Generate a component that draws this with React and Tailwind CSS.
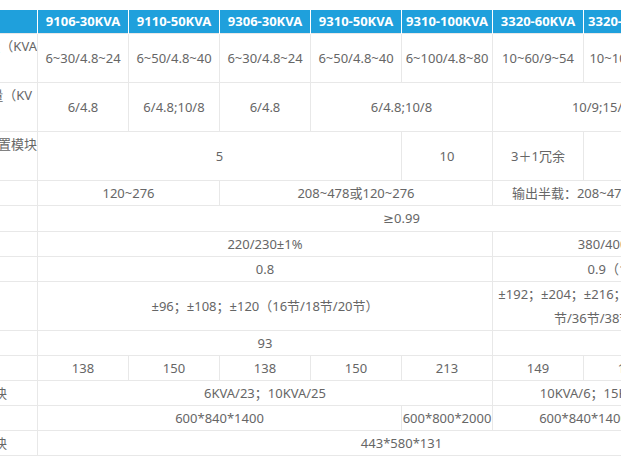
import React from 'react'

const models = [
  '9106-30KVA',
  '9110-50KVA',
  '9306-30KVA',
  '9310-50KVA',
  '9310-100KVA',
  '3320-60KVA',
  '3320-100KVA',
  '3320-120KVA',
]

// each row: label parts + cells [text, colSpan]
const rows = [
  {
    label: { first: '额定容量（KVA', rest: '/KW）', pr: 'pr-0' },
    tall: true,
    cells: [
      ['6~30/4.8~24'],
      ['6~50/4.8~40'],
      ['6~30/4.8~24'],
      ['6~50/4.8~40'],
      ['6~100/4.8~80'],
      ['10~60/9~54'],
      ['10~100/9~90'],
      ['10~120/9~108'],
    ],
  },
  {
    label: { first: '单模块容量（KV', rest: 'A/KW）', pr: 'pr-[5px]' },
    tall: true,
    cells: [['6/4.8'], ['6/4.8;10/8'], ['6/4.8'], ['6/4.8;10/8', 2], ['10/9;15/13.5;20/18', 3]],
  },
  {
    label: { first: '最大配置模块', rest: '数量', pr: 'pr-0' },
    tall: true,
    cells: [['5', 4], ['10'], ['3＋1冗余'], ['4＋1冗余', 2]],
  },
  {
    label: { text: '输入电压' },
    cells: [['120~276', 2], ['208~478或120~276', 3], ['输出半载：208~478或120~276（三相）', 3]],
  },
  {
    label: { text: '功率因数' },
    cells: [
      [
        <>
          <span className="font-['DejaVu_Sans']">≥</span>0.99
        </>,
        8,
      ],
    ],
  },
  { label: { text: '输出电压' }, cells: [['220/230±1%', 5], ['380/400/415±1%', 3]] },
  { label: { text: '功率因数' }, cells: [['0.8', 5], ['0.9（10KVA）', 3]] },
  {
    label: { text: '电池电压' },
    cells: [
      ['±96；±108；±120（16节/18节/20节）', 5],
      [['±192；±204；±216；±228；±240（32节/34', '节/36节/38节/40节可选）'], 3],
    ],
  },
  { label: { text: '效率' }, cells: [['93', 5], ['93', 3]] },
  {
    label: { end: '重量（kg）', pr: 'pr-[30px]' },
    cells: [['138'], ['150'], ['138'], ['150'], ['213'], ['149'], ['180'], ['195']],
  },
  {
    label: { end: '重量/模块', pr: 'pr-[30px]' },
    cells: [['6KVA/23；10KVA/25', 5], ['10KVA/6；15KVA/8；20KVA/9', 3]],
  },
  {
    label: { end: '尺寸（mm）', pr: 'pr-[30px]' },
    cells: [['600*840*1400', 4], ['600*800*2000'], ['600*840*1400', 2], ['600*800*2000']],
  },
  { label: { end: '尺寸/模块', pr: 'pr-[30px]' }, cells: [['443*580*131', 8]] },
]

function Label({ label }) {
  const base = 'border border-[#e8e8e8] p-0 leading-6 overflow-hidden whitespace-nowrap'
  if (label.first) {
    return (
      <td className={`${base} align-top`}>
        <div className={`text-right ${label.pr}`}>{label.first}</div>
        <div className="pl-2 text-left">{label.rest}</div>
      </td>
    )
  }
  if (label.end) {
    return (
      <td className={`${base} align-middle`}>
        <div className={`text-right ${label.pr}`}>{label.end}</div>
      </td>
    )
  }
  return (
    <td className={`${base} align-middle`}>
      <div className="pl-2 text-left">{label.text}</div>
    </td>
  )
}

export default function App() {
  return (
    <div
      className="h-[466px] w-[621px] overflow-hidden bg-white pt-[10px] text-[13px] text-[#666]"
      style={{ fontFamily: '"Noto Sans", "Noto Sans CJK SC", sans-serif' }}
    >
      <table className="ml-[-83px] w-[848px] table-fixed border-collapse">
        <colgroup>
          <col className="w-[120px]" />
          {models.map((m) => (
            <col key={m} className="w-[91px]" />
          ))}
        </colgroup>
        <thead>
          <tr className="bg-[#1fa0dc] text-white">
            <th className="border-x border-white p-0 pl-2 text-left text-[13px] font-bold leading-[23px]">
              型号
            </th>
            {models.map((m) => (
              <th
                key={m}
                className="whitespace-nowrap border-x border-white p-0 text-center text-[13px] font-bold leading-[23px]"
              >
                {m}
              </th>
            ))}
          </tr>
        </thead>
        <tbody>
          {rows.map((row, i) => (
            <tr key={i} className={row.tall ? 'h-[49px]' : ''}>
              <Label label={row.label} />
              {row.cells.map(([text, span], j) => (
                <td
                  key={j}
                  colSpan={span || 1}
                  className="whitespace-nowrap border border-[#e8e8e8] p-0 text-center leading-6"
                >
                  {Array.isArray(text) ? (
                    <>
                      <div>{text[0]}</div>
                      <div>{text[1]}</div>
                    </>
                  ) : (
                    text
                  )}
                </td>
              ))}
            </tr>
          ))}
        </tbody>
      </table>
    </div>
  )
}
